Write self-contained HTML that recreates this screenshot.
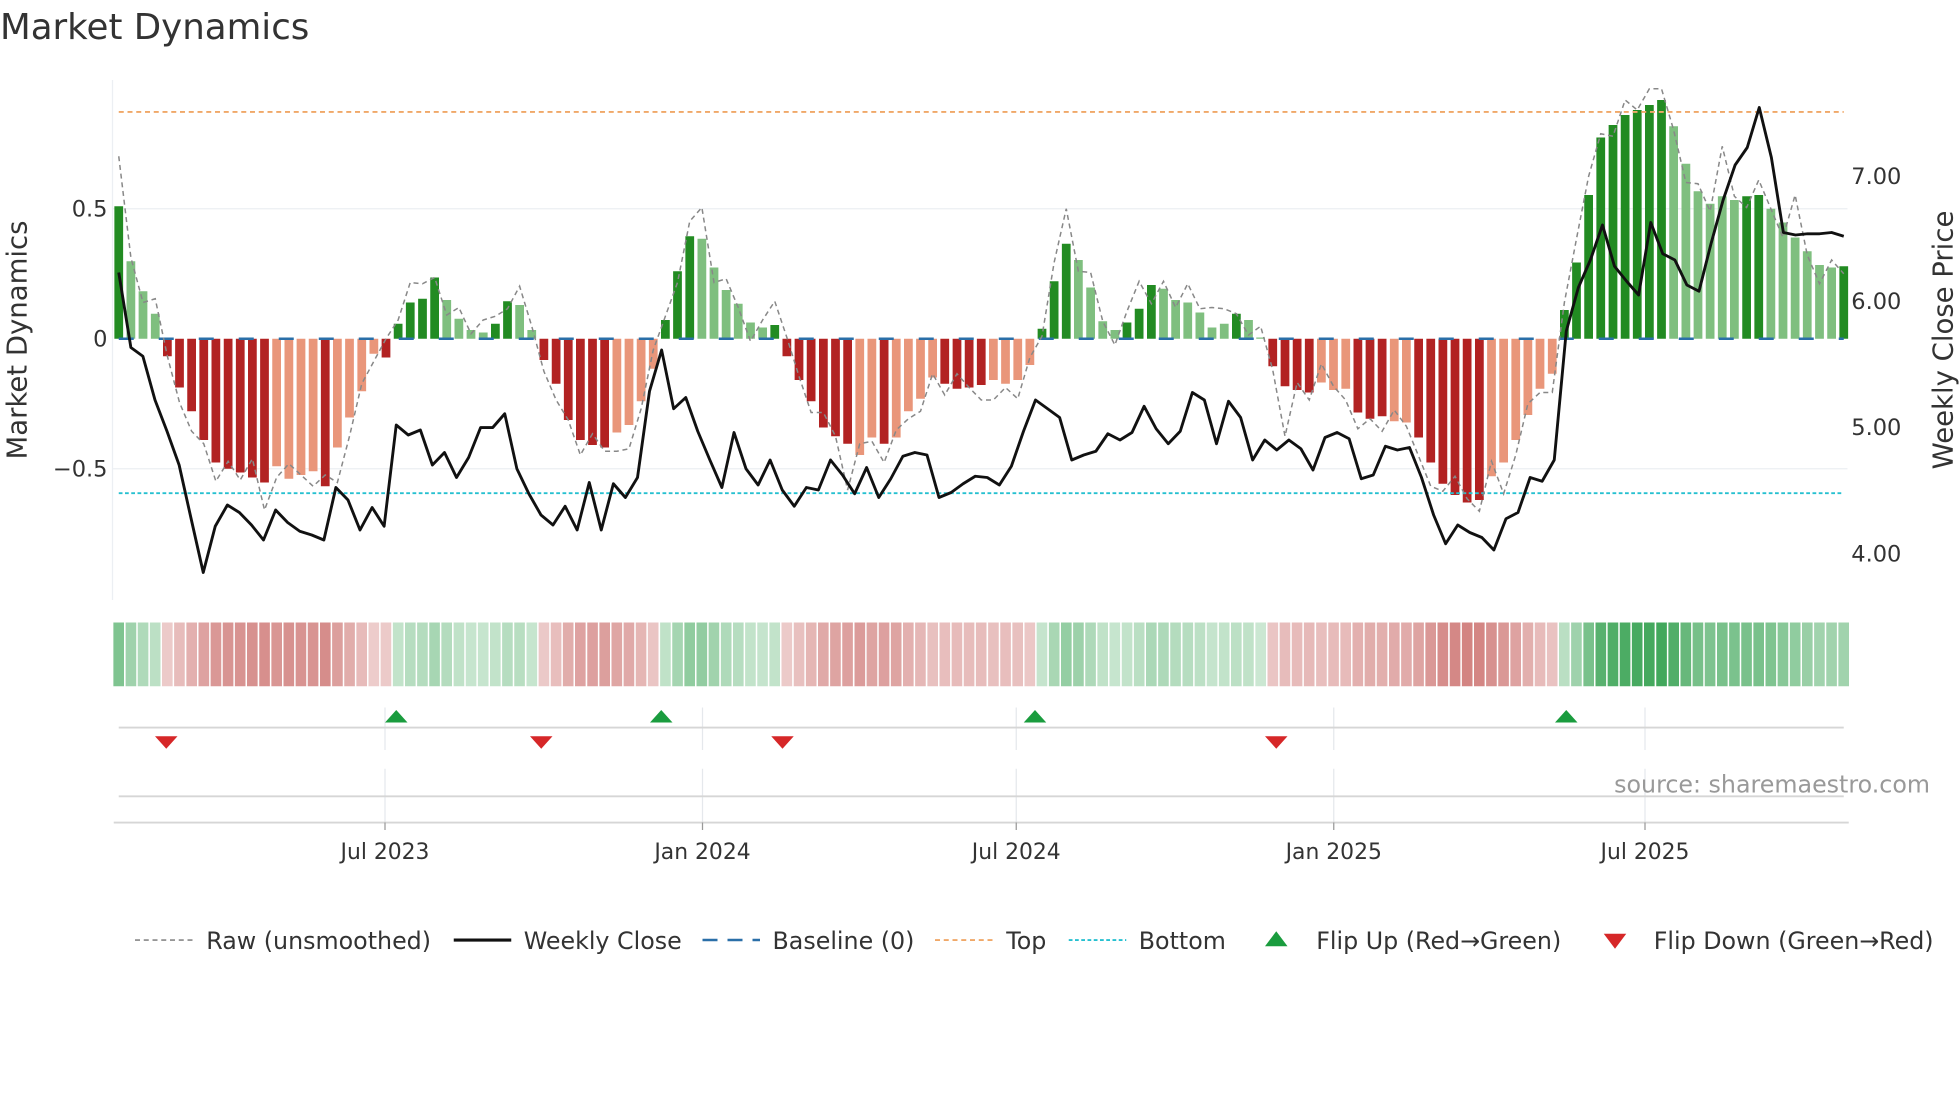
<!DOCTYPE html>
<html><head><meta charset="utf-8"><style>
html,body{margin:0;padding:0;background:#fff;width:1960px;height:1102px;overflow:hidden}
svg{display:block;font-family:"DejaVu Sans","Liberation Sans",sans-serif}
</style></head><body>
<svg id="s" width="1960" height="1102" viewBox="0 0 1568 881.6" xmlns="http://www.w3.org/2000/svg">
<rect width="1568" height="882" fill="#fff"/>
<text x="0" y="31" font-size="28.5" fill="#333">Market Dynamics</text>
<line x1="90" y1="64" x2="90" y2="480" stroke="#eceff3" stroke-width="1"/>
<line x1="90" y1="167" x2="1478" y2="167" stroke="#eceff3"/>
<line x1="90" y1="375" x2="1478" y2="375" stroke="#eceff3"/>
<text x="86" y="173" font-size="18" fill="#333" text-anchor="end">0.5</text>
<text x="86" y="277" font-size="18" fill="#333" text-anchor="end">0</text>
<text x="86" y="381" font-size="18" fill="#333" text-anchor="end">−0.5</text>
<text x="1481" y="147" font-size="18" fill="#333">7.00</text>
<text x="1481" y="247" font-size="18" fill="#333">6.00</text>
<text x="1481" y="348" font-size="18" fill="#333">5.00</text>
<text x="1481" y="449" font-size="18" fill="#333">4.00</text>
<text transform="translate(21,272) rotate(-90)" font-size="22" fill="#333" text-anchor="middle">Market Dynamics</text>
<text transform="translate(1562,272) rotate(-90)" font-size="22" fill="#333" text-anchor="middle">Weekly Close Price</text>
<g id="bars"></g>
<line x1="95" y1="89.5" x2="1475" y2="89.5" stroke="#f0a868" stroke-width="1.5" stroke-dasharray="4,3"/>
<line x1="95" y1="394.5" x2="1475" y2="394.5" stroke="#26c0d0" stroke-width="1.5" stroke-dasharray="3,2"/>
<line x1="95" y1="271" x2="1475" y2="271" stroke="#2a6fa8" stroke-width="2" stroke-dasharray="12,20"/>
<polyline id="raw" fill="none" stroke="#888" stroke-width="1.2" stroke-dasharray="4,3"/>
<polyline id="close" fill="none" stroke="#111" stroke-width="2.3" stroke-linejoin="round"/>
<g id="heat"></g>
<g stroke="#e5e8ec">
<line x1="308" y1="566" x2="308" y2="600"/><line x1="562" y1="566" x2="562" y2="600"/><line x1="813" y1="566" x2="813" y2="600"/><line x1="1067" y1="566" x2="1067" y2="600"/><line x1="1316" y1="566" x2="1316" y2="600"/>
<line x1="308" y1="615" x2="308" y2="658"/><line x1="562" y1="615" x2="562" y2="658"/><line x1="813" y1="615" x2="813" y2="658"/><line x1="1067" y1="615" x2="1067" y2="658"/><line x1="1316" y1="615" x2="1316" y2="658"/>
</g>
<line x1="95" y1="582" x2="1475" y2="582" stroke="#d6d6d6" stroke-width="1.5"/>
<line x1="95" y1="637" x2="1475" y2="637" stroke="#d6d6d6" stroke-width="1.5"/>
<line x1="91" y1="658" x2="1479" y2="658" stroke="#d6d6d6" stroke-width="1.5"/>
<g stroke="#999"><line x1="308" y1="658" x2="308" y2="664"/><line x1="562" y1="658" x2="562" y2="664"/><line x1="813" y1="658" x2="813" y2="664"/><line x1="1067" y1="658" x2="1067" y2="664"/><line x1="1316" y1="658" x2="1316" y2="664"/></g>
<g font-size="17.5" fill="#333" text-anchor="middle">
<text x="308" y="687">Jul 2023</text><text x="562" y="687">Jan 2024</text><text x="813" y="687">Jul 2024</text><text x="1067" y="687">Jan 2025</text><text x="1316" y="687">Jul 2025</text></g>
<text x="1544" y="634" font-size="19" fill="#999" text-anchor="end">source: sharemaestro.com</text>
<g fill="#1a9c3e"><path d="M308,578 l9,-10 l9,10z"/><path d="M520,578 l9,-10 l9,10z"/><path d="M819,578 l9,-10 l9,10z"/><path d="M1244,578 l9,-10 l9,10z"/></g>
<g fill="#d62728"><path d="M124,589 l9,10 l9,-10z"/><path d="M424,589 l9,10 l9,-10z"/><path d="M617,589 l9,10 l9,-10z"/><path d="M1012,589 l9,10 l9,-10z"/></g>
<g font-size="19" fill="#333">
<line x1="108" y1="752" x2="154" y2="752" stroke="#888" stroke-width="1.3" stroke-dasharray="4,3"/><text x="165" y="759">Raw (unsmoothed)</text>
<line x1="363" y1="752" x2="409" y2="752" stroke="#111" stroke-width="2.5"/><text x="419" y="759">Weekly Close</text>
<line x1="562" y1="752" x2="608" y2="752" stroke="#2a6fa8" stroke-width="2" stroke-dasharray="12,8"/><text x="618" y="759">Baseline (0)</text>
<line x1="748" y1="752" x2="794" y2="752" stroke="#f0a868" stroke-width="1.5" stroke-dasharray="4,3"/><text x="805" y="759">Top</text>
<line x1="855" y1="752" x2="901" y2="752" stroke="#26c0d0" stroke-width="1.5" stroke-dasharray="3,2"/><text x="911" y="759">Bottom</text>
<path d="M1012,757 l9,-12 l9,12z" fill="#1a9c3e"/><text x="1053" y="759">Flip Up (Red→Green)</text>
<path d="M1283,747 l9,12 l9,-12z" fill="#d62728"/><text x="1323" y="759">Flip Down (Green→Red)</text>
</g>
</svg>
<script>
var B=[[165,1],[209,0],[233,0],[251,0],[285,1],[310,1],[329,1],[352,1],[370,1],[375,1],[378,1],[382,1],[386,1],[373,0],[383,0],[380,0],[377,0],[389,1],[358,0],[334,0],[313,0],[283,0],[286,1],
[259,1],[242,1],[239,1],[222,1],[240,0],[255,0],[264,0],[266,0],[259,1],[241,1],[244,0],[264,0],
[288,1],[307,1],[336,1],[352,1],[356,1],[358,1],[346,0],[340,0],[321,0],[295,0],
[256,1],[217,1],[189,1],[191,0],[214,0],[232,0],[243,0],[258,0],[262,0],[260,1],
[285,1],[304,1],[321,1],[342,1],[349,1],[355,1],[364,0],[350,0],[355,1],[350,0],[329,0],[319,0],[302,0],[307,1],[311,1],[310,1],[308,1],[304,0],[307,0],[304,0],[292,0],
[263,1],[225,1],[195,1],[208,0],[230,0],[257,0],[264,0],[258,1],[247,1],[228,1],[231,0],[240,0],[242,0],[250,0],[262,0],[259,0],[251,1],[256,0],[270,0],
[293,1],[309,1],[312,1],[314,1],[306,0],[312,0],[311,0],[330,1],[335,1],[333,1],[337,0],[338,0],[350,1],[370,1],[387,1],[396,1],[402,1],[400,1],[381,0],[370,0],[352,0],[332,0],[311,0],[299,0],
[248,1],[210,1],[156,1],[110,1],[100,1],[92,1],[88,1],[84,1],[80,1],[101,0],[131,0],[153,0],[163,0],[157,0],[160,0],[157,1],[156,1],[167,0],[178,0],[190,0],[201,0],[212,0],[214,0],[213,1]];
var n=B.length,x0=95,x1=1475,dx=(x1-x0)/(n-1),bw=dx*0.72,g='',h='',raw=[];
for(var i=0;i<n;i++){var y=B[i][0],x=x0+i*dx,up=y<271,c;
 if(up)c=B[i][1]?'#228b22':'#7fbf7f';else c=B[i][1]?'#b22222':'#e9967a';
 var t=Math.min(y,271),hh=Math.abs(y-271);
 g+='<rect x="'+(x-bw/2).toFixed(1)+'" y="'+t+'" width="'+bw.toFixed(1)+'" height="'+hh+'" fill="'+c+'"/>';
 var v=Math.min(1,hh/190),op=(0.25+0.65*v).toFixed(2);
 h+='<rect x="'+(x-dx/2+0.6).toFixed(1)+'" y="498" width="'+(dx-1.2).toFixed(1)+'" height="51" fill="'+(up?'#2e9e4a':'#c0504d')+'" fill-opacity="'+op+'"/>';
 var off=((i*37)%11-5)*3; if(i%6==0)off+=up?-25:25;
 raw.push(x.toFixed(1)+','+(y+off).toFixed(1));}
document.getElementById('bars').innerHTML=g;document.getElementById('heat').innerHTML=h;
document.getElementById('raw').setAttribute('points',raw.join(' '));
var C=[218,278,285,320,345,372,415,458,421,404,410,420,432,408,418,425,428,432,390,400,424,406,421,340,348,344,372,362,382,366,342,342,331,375,395,412,420,405,424,386,424,387,398,382,313,280,327,318,345,368,390,346,375,388,368,392,405,390,392,368,380,395,374,398,383,365,362,364,398,394,387,381,382,388,373,345,320,327,334,368,364,361,347,352,346,325,343,355,345,314,320,355,321,334,368,352,360,352,359,376,350,346,351,383,380,357,360,358,382,412,435,420,426,430,440,415,410,382,385,368,265,230,208,180,213,225,236,178,203,208,228,233,195,160,132,118,86,126,186,188,187,187,186,189];
var m=C.length,d2=(x1-x0)/(m-1),p=[];for(var j=0;j<m;j++)p.push((x0+j*d2).toFixed(1)+','+C[j]);
document.getElementById('close').setAttribute('points',p.join(' '));
</script>
</body></html>
